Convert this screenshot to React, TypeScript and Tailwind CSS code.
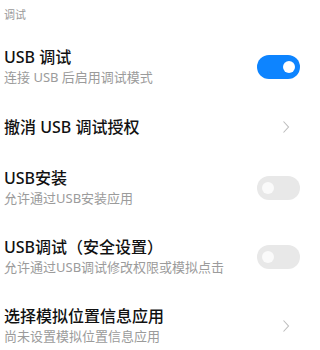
import React from 'react';

type Row =
  | { kind: 'toggle'; title: string; sub?: string; on: boolean }
  | { kind: 'link'; title: string; sub?: string };

const rows: Row[] = [
  { kind: 'toggle', title: 'USB 调试', sub: '连接 USB 后启用调试模式', on: true },
  { kind: 'link', title: '撤消 USB 调试授权' },
  { kind: 'toggle', title: 'USB安装', sub: '允许通过USB安装应用', on: false },
  { kind: 'toggle', title: 'USB调试（安全设置）', sub: '允许通过USB调试修改权限或模拟点击', on: false },
  { kind: 'link', title: '选择模拟位置信息应用', sub: '尚未设置模拟位置信息应用' },
];

function Toggle({ on }: { on: boolean }) {
  return (
    <div
      className={
        'flex h-[24px] w-[43px] shrink-0 items-center rounded-full px-[5px] ' +
        (on ? 'justify-end bg-[#0d84ff]' : 'justify-start bg-[#e8e8e8]')
      }
    >
      <div className={'h-[12px] w-[12px] rounded-full ' + (on ? 'bg-white' : 'bg-[#fafafa]')} />
    </div>
  );
}

function Chevron() {
  return (
    <svg width="8" height="14" viewBox="0 0 8 14" className="mr-[10px] shrink-0">
      <path d="M1.5 1.5 L6.5 7 L1.5 12.5" fill="none" stroke="#bdbdbd" strokeWidth="1.1" />
    </svg>
  );
}

export default function App() {
  return (
    <div
      className="h-[350px] w-[309px] overflow-hidden bg-white"
      style={{ fontFamily: '"Noto Sans", "Noto Sans CJK SC", sans-serif' }}
    >
      <div className="pl-[4px] pt-[7px] pb-[9px] text-[11px] leading-[16px] text-[#9a9a9a]">调试</div>
      {rows.map((r, i) => (
        <div
          key={i}
          className={'flex items-center justify-between pl-[4px] pr-[9px] ' + (r.sub ? 'py-[14px]' : 'py-[15px]')}
        >
          <div className="min-w-0">
            <div className="text-[16px] font-medium leading-[22px] text-[#111]">{r.title}</div>
            {r.sub && <div className="text-[13px] leading-[19px] text-[#9b9b9b]">{r.sub}</div>}
          </div>
          {r.kind === 'toggle' ? <Toggle on={r.on} /> : <Chevron />}
        </div>
      ))}
    </div>
  );
}
